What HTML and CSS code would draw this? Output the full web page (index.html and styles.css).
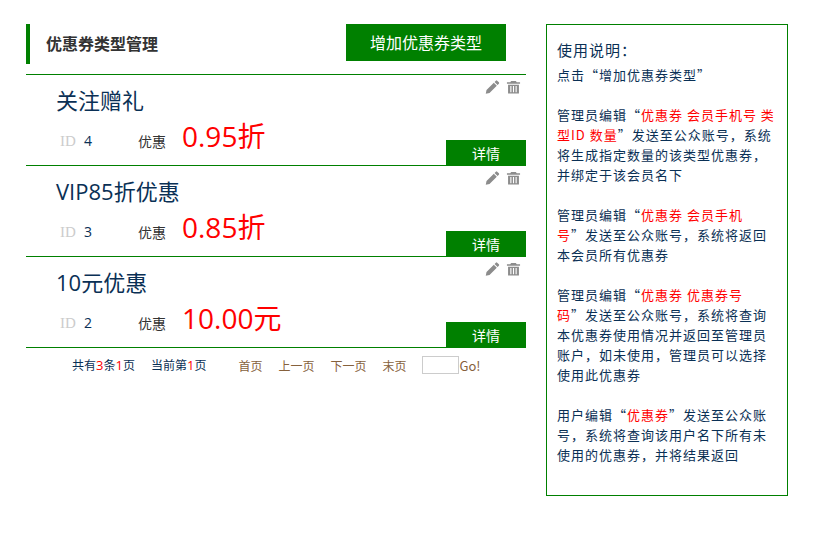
FILE: index.html
```html
<!DOCTYPE html>
<html lang="zh">
<head>
<meta charset="utf-8">
<title>优惠券类型管理</title>
<link rel="stylesheet" href="styles.css">
</head>
<body>
<div class="page">
  <main class="main">
    <header class="head">
      <h1 class="title">优惠券类型管理</h1>
      <a class="add">增加优惠券类型</a>
    </header>
    <ul class="list">
      <li class="item">
        <div class="tools">
          <svg class="ico" viewBox="0 0 16 16"><path d="M11.6 1.2a1 1 0 0 1 1.4 0l1.8 1.8a1 1 0 0 1 0 1.4l-1.4 1.4-3.2-3.2zM9.4 3.4l3.2 3.2-7.8 7.8-4 .8.8-4z"/></svg>
          <svg class="ico" viewBox="0 0 16 16"><path d="M5.5 1.5h5l1 1.5H15v1.6H1V3h3.500zM2.200 5.500h11.600V15H2.200zM4.600 7v6.500h1.200V7zM7.400 7v6.500h1.200V7zM10.200 7v6.500h1.200V7z" fill-rule="evenodd"/></svg>
        </div>
        <h2 class="name">关注赠礼</h2>
        <div class="meta"><span class="idl">ID</span><span class="idv">4</span><span class="disc">优惠</span><span class="val">0.95折</span></div>
        <a class="more">详情</a>
      </li>
      <li class="item">
        <div class="tools">
          <svg class="ico" viewBox="0 0 16 16"><path d="M11.6 1.2a1 1 0 0 1 1.4 0l1.8 1.8a1 1 0 0 1 0 1.4l-1.4 1.4-3.2-3.2zM9.4 3.4l3.2 3.2-7.8 7.8-4 .8.8-4z"/></svg>
          <svg class="ico" viewBox="0 0 16 16"><path d="M5.5 1.5h5l1 1.5H15v1.6H1V3h3.500zM2.200 5.500h11.600V15H2.200zM4.600 7v6.500h1.200V7zM7.400 7v6.500h1.200V7zM10.200 7v6.500h1.200V7z" fill-rule="evenodd"/></svg>
        </div>
        <h2 class="name">VIP85折优惠</h2>
        <div class="meta"><span class="idl">ID</span><span class="idv">3</span><span class="disc">优惠</span><span class="val">0.85折</span></div>
        <a class="more">详情</a>
      </li>
      <li class="item">
        <div class="tools">
          <svg class="ico" viewBox="0 0 16 16"><path d="M11.6 1.2a1 1 0 0 1 1.4 0l1.8 1.8a1 1 0 0 1 0 1.4l-1.4 1.4-3.2-3.2zM9.4 3.4l3.2 3.2-7.8 7.8-4 .8.8-4z"/></svg>
          <svg class="ico" viewBox="0 0 16 16"><path d="M5.5 1.5h5l1 1.5H15v1.6H1V3h3.500zM2.200 5.500h11.600V15H2.200zM4.600 7v6.500h1.200V7zM7.400 7v6.500h1.200V7zM10.200 7v6.500h1.200V7z" fill-rule="evenodd"/></svg>
        </div>
        <h2 class="name">10元优惠</h2>
        <div class="meta"><span class="idl">ID</span><span class="idv">2</span><span class="disc">优惠</span><span class="val">10.00元</span></div>
        <a class="more">详情</a>
      </li>
    </ul>
    <nav class="pager">
      <span class="count">共有<b>3</b>条<b>1</b>页</span>
      <span class="current">当前第<b>1</b>页</span>
      <a class="first">首页</a><a>上一页</a><a>下一页</a><a>末页</a>
      <span class="jump"><input class="jump-in" type="text" aria-label="页码"><a class="go">Go!</a></span>
    </nav>
  </main>
  <aside class="help">
    <h3 class="help-title">使用说明：</h3>
    <p>点击“增加优惠券类型”</p>
    <p>管理员编辑“<em>优惠券 会员手机号 类型ID 数量</em>”发送至公众账号，系统将生成指定数量的该类型优惠券，并绑定于该会员名下</p>
    <p>管理员编辑“<em>优惠券 会员手机<br>号</em>”发送至公众账号，系统将返回本会员所有优惠券</p>
    <p>管理员编辑“<em>优惠券 优惠券号<br>码</em>”发送至公众账号，系统将查询本优惠券使用情况并返回至管理员账户，如未使用，管理员可以选择使用此优惠券</p>
    <p>用户编辑“<em>优惠券</em>”发送至公众账号，系统将查询该用户名下所有未使用的优惠券，并将结果返回</p>
  </aside>
</div>
</body>
</html>
```

FILE: styles.css
```css
* { box-sizing: border-box; }
html, body { margin: 0; padding: 0; background: #fff; }
body { font-family: "Noto Sans CJK SC", "Liberation Sans", sans-serif; color: #0a3055; font-size: 13px; }
.page { display: flex; align-items: flex-start; gap: 20px; padding: 24px 0 0 26px; }
.main { width: 500px; }
.head { height: 51px; display: flex; align-items: flex-start; justify-content: space-between; padding-right: 20px; border-bottom: 1px solid #008000; }
.title { margin: 0; height: 40px; border-left: 4px solid #008000; padding-left: 16px; font-size: 16px; line-height: 38px; font-weight: 700; color: #333; }
.add { width: 160px; height: 37px; background: #008000; color: #fff; font-size: 16px; line-height: 37px; text-align: center; }
.list { margin: 0; padding: 0; list-style: none; }
.item { height: 91px; position: relative; padding: 10px 0 0 30px; border-bottom: 1px solid #008000; }
.tools { position: absolute; top: 4px; right: 5px; display: flex; gap: 6px; }
.ico { width: 15px; height: 16px; fill: #8c8c8c; display: block; }
.name { margin: 0; font-family: "Open Sans", "Noto Sans CJK SC", sans-serif; font-size: 22px; font-weight: 400; line-height: 30px; color: #0a3055; }
.meta { display: flex; align-items: flex-start; height: 34px; margin-top: 4px; }
.idl { width: 24px; margin: 12px 0 0 4px; color: #ccc; font-family: "Liberation Serif", serif; font-size: 15px; line-height: 20px; }
.idv { width: 54px; margin-top: 12px; font-family: "Open Sans", sans-serif; font-size: 14px; line-height: 20px; }
.disc { width: 44px; margin-top: 12px; color: #333; font-size: 14px; line-height: 20px; }
.val { font-family: "Open Sans", "Noto Sans CJK SC", sans-serif; color: #f00; font-size: 28px; line-height: 34px; }
.more { position: absolute; right: 0; bottom: -1px; width: 80px; height: 26px; background: #008000; color: #fff; font-size: 14px; line-height: 26px; text-align: center; }
.pager { display: flex; align-items: center; height: 34px; padding-left: 46px; font-size: 12px; color: #0a3055; }
.pager b { font-family: "Open Sans", sans-serif; font-size: 13px; font-weight: 400; color: #f00; }
.pager a { color: #86613c; margin-right: 16px; }
.count { margin-right: 16px; }
.current { margin-right: 32px; }
.jump { display: flex; align-items: center; }
.jump-in { width: 37px; height: 18px; border: 1px solid #ccc; background: #fff; padding: 0; margin: 0; }
.pager .go { margin: 0; color: #86613c; font-size: 13px; }
.help { width: 242px; height: 472px; border: 1px solid #008000; padding: 13px 10px 0; font-size: 13px; line-height: 20px; letter-spacing: 1px; }
.help-title { margin: 0 0 3px; font-size: 15px; line-height: 24px; font-weight: 400; color: #0a3055; letter-spacing: 1px; }
.help p { margin: 0 0 20px; }
.help em { font-style: normal; color: #f00; }
```
